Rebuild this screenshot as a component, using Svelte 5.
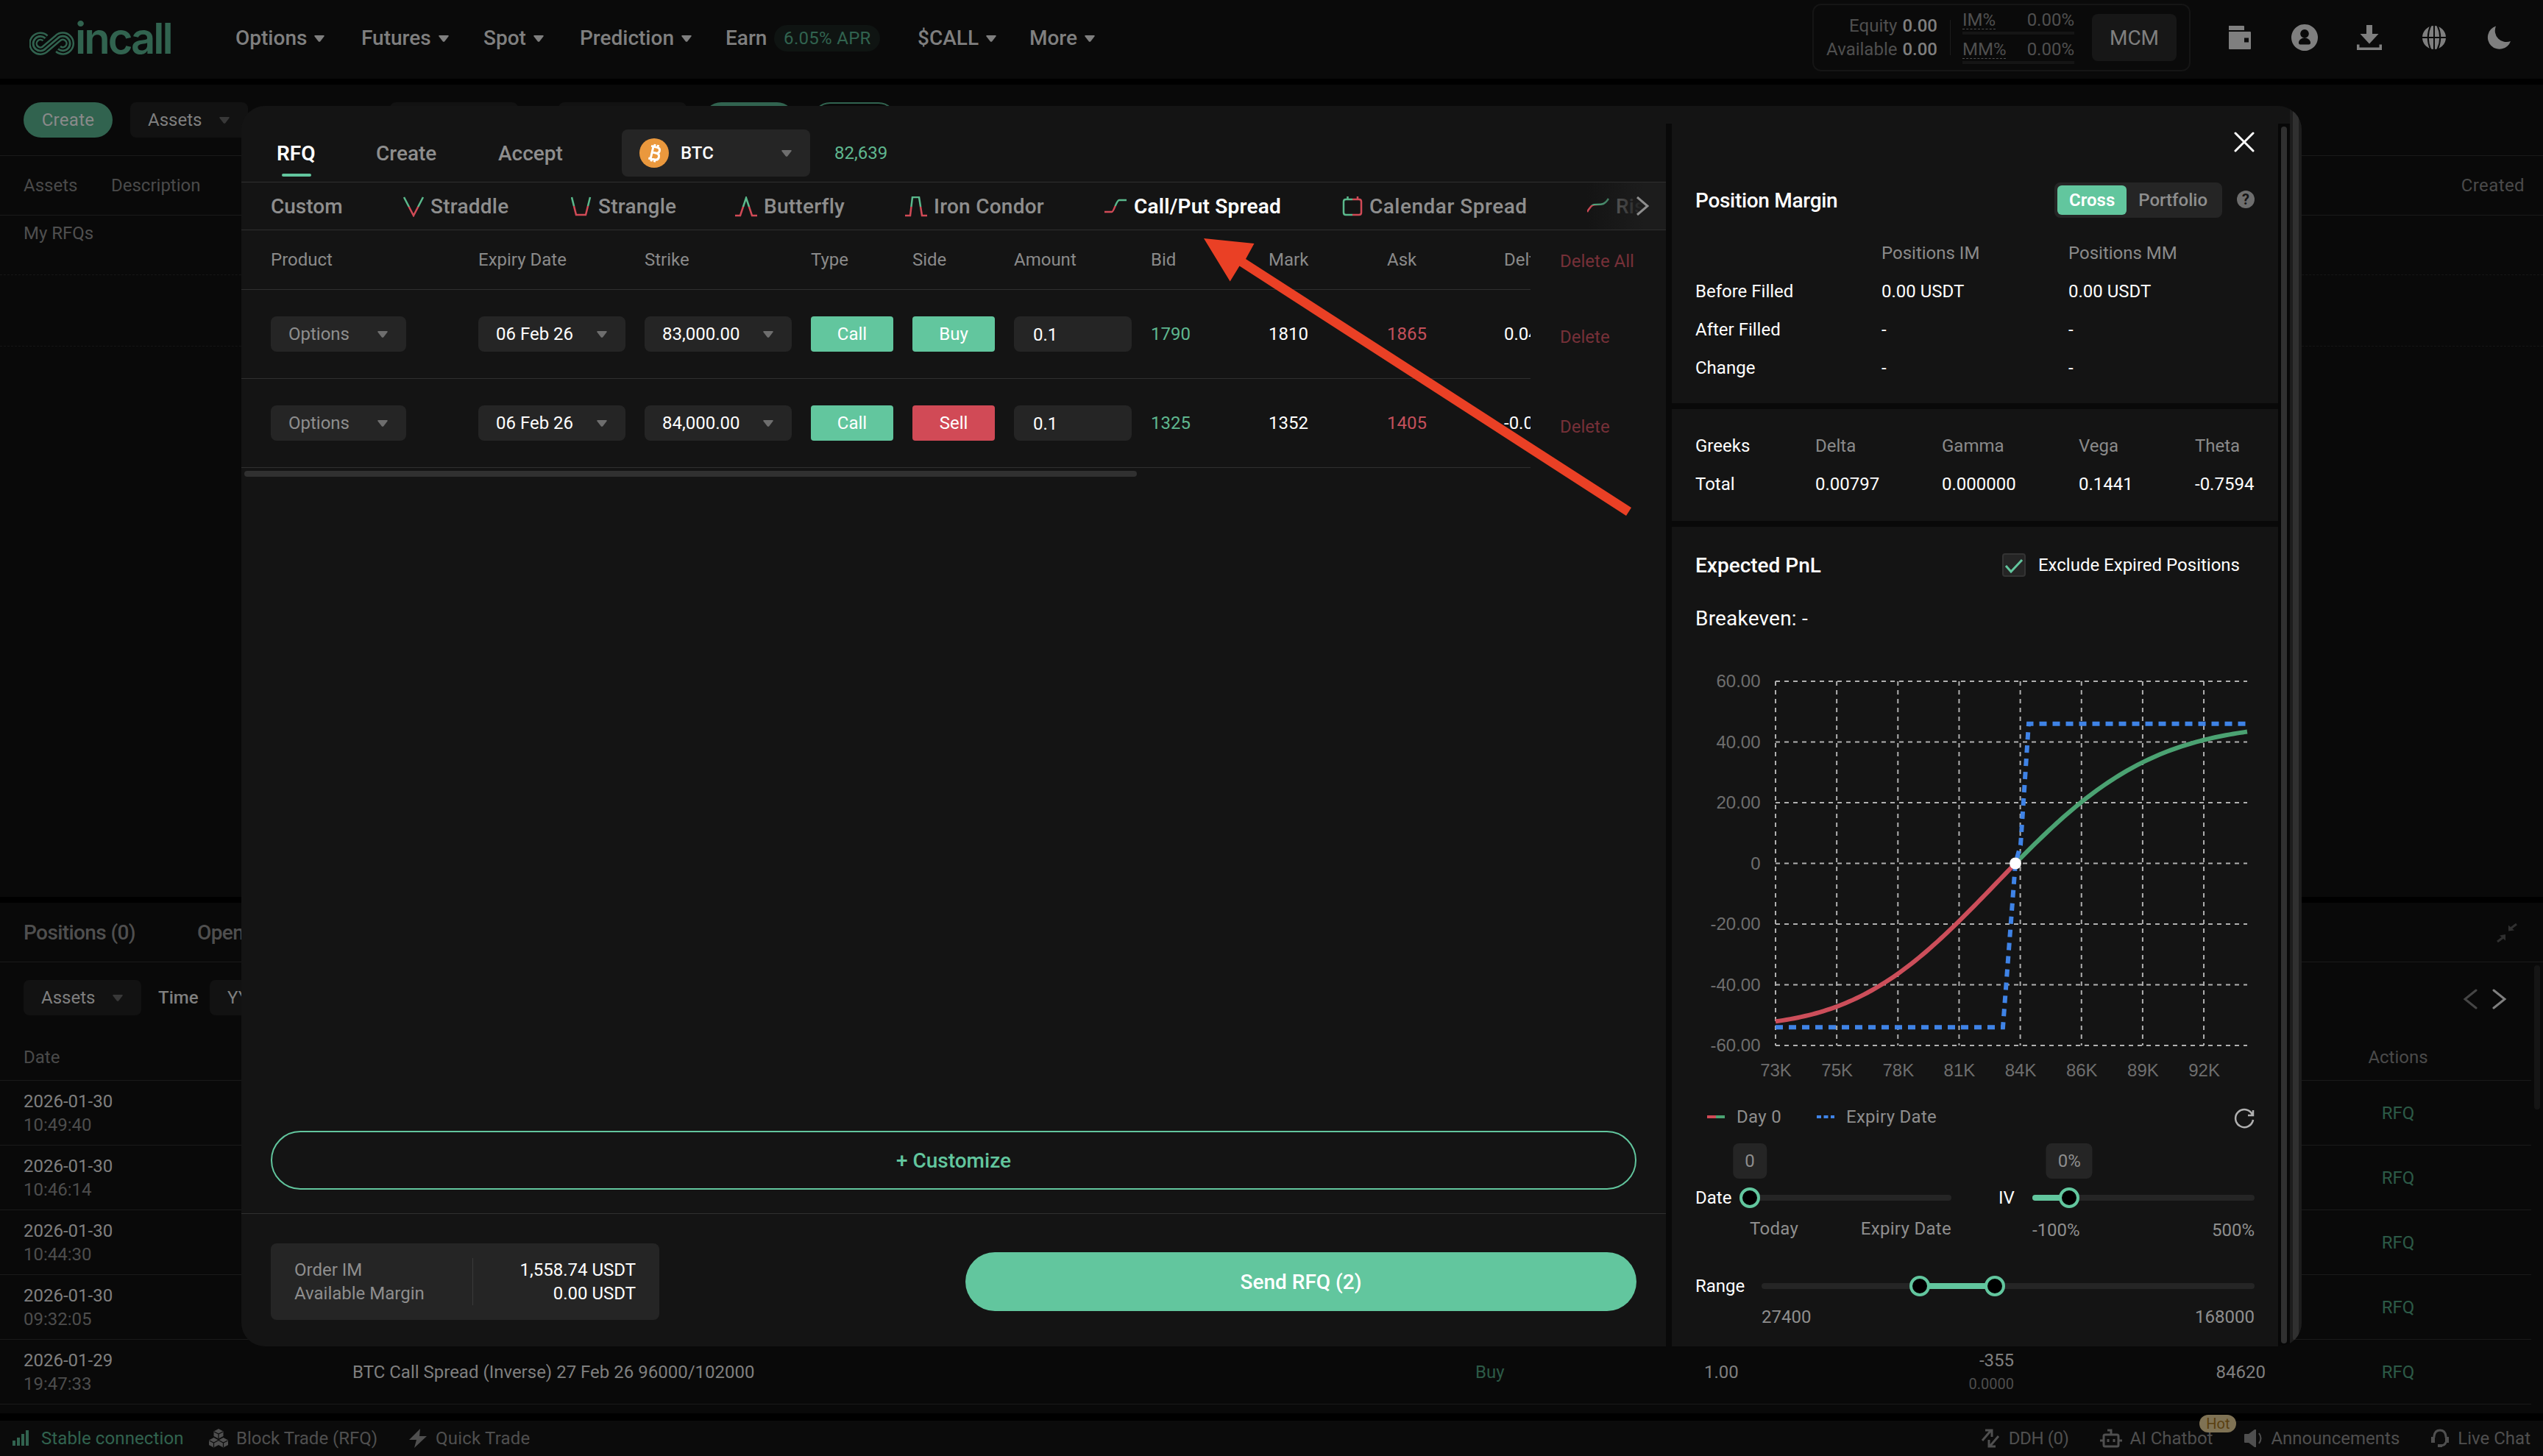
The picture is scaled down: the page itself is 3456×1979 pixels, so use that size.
<script lang="ts">
	type Strategy = { label: string, icon?: string, width?: number }
	type Leg = { strike: string, side: string, bid: string, mark: string, ask: string, delta: string }

	const menu = [
		{ label: "Options", caret: true },
		{ label: "Futures", caret: true },
		{ label: "Spot", caret: true },
		{ label: "Prediction", caret: true },
		{ label: "Earn", badge: "6.05% APR" },
		{ label: "$CALL", caret: true },
		{ label: "More", caret: true }
	]

	const strategies: Strategy[] = [
		{ label: "Custom" },
		{ label: "Straddle", width: 28, icon: "M1 1 L14 26 L27 1" },
		{ label: "Strangle", width: 28, icon: "M1 1 L7 25 H20 L26 1" },
		{ label: "Butterfly", width: 30, icon: "M0 26 H7 L15 2 L23 26 H30" },
		{ label: "Iron Condor", width: 30, icon: "M0 26 H7 L10 1 H19 L23 26 H30" },
		{ label: "Call/Put Spread", width: 30, icon: "M0 21 H10 C13 21 16 5 20 5 H30" },
		{ label: "Calendar Spread", width: 28, icon: "M5 4 H23 Q26 4 26 7 V22 Q26 25 23 25 H5 Q2 25 2 22 V7 Q2 4 5 4 M7.500 0 V4 M21 0 V4" },
		{ label: "Risk Reversal", width: 30, icon: "M0 21 C6 11 8 11 14 11 S24 11 29 3" }
	]
	let active = $state("Call/Put Spread")

	const legs: Leg[] = [
		{ strike: "83,000.00", side: "Buy", bid: "1790", mark: "1810", ask: "1865", delta: "0.04512" },
		{ strike: "84,000.00", side: "Sell", bid: "1325", mark: "1352", ask: "1405", delta: "-0.03715" }
	]

	const history = [
		{ date: "2026-01-30", time: "10:49:40" },
		{ date: "2026-01-30", time: "10:46:14" },
		{ date: "2026-01-30", time: "10:44:30" },
		{ date: "2026-01-30", time: "09:32:05" },
		{ date: "2026-01-29", time: "19:47:33", name: "BTC Call Spread (Inverse) 27 Feb 26 96000/102000", side: "Buy", amount: "1.00", price: "-355", sub: "0.0000", index: "84620" }
	]

	const greeks = [
		["Delta", "0.00797"],
		["Gamma", "0.000000"],
		["Vega", "0.1441"],
		["Theta", "-0.7594"]
	]

	// chart geometry
	const plot = { left: 109, top: 46, width: 641, step: 82.5, col: 83.15 }
	const yTicks = ["60.00", "40.00", "20.00", "0", "-20.00", "-40.00", "-60.00"]
	const xTicks = ["73K", "75K", "78K", "81K", "84K", "86K", "89K", "92K"]
	const breakeven = 326

	const px = (x: number) => plot.left + x
	const py = (v: number) => plot.top + (60 - v) / 20 * plot.step

	/** Spread value before expiry: a normal cdf between max loss and max profit */
	function dayZero(x: number) {
		const z = -2.07 + 0.00707 * x - 1.271e-6 * x * x
		return -54 + 100 / (1 + Math.exp(-1.5976 * z - 0.07056 * z ** 3))
	}

	function curve(from: number, to: number) {
		let d = ""
		for (let x = from; x < to; x += 5) d += `${d ? "L" : "M"}${px(x)} ${py(dayZero(x))} `
		return d + `L${px(to)} ${py(dayZero(to))}`
	}

	const expiry = [[0, -54], [309, -54], [326, 0], [333, 6], [344, 46], [641, 46]]
	const expiryPath = expiry.map(([x, v], i) => `${i ? "L" : "M"}${px(x)} ${py(v)}`).join(" ")
</script>

{#snippet caret()}
	<svg class="caret" viewBox="0 0 14 9"><path d="M1.200 0 H12.800 Q14.300 .3 13.500 1.600 L8.300 8.200 Q7 9.500 5.700 8.200 L.5 1.600 Q-.3 .3 1.200 0Z" /></svg>
{/snippet}

{#snippet select(label: string, muted: boolean = false)}
	<div class="select" class:muted>
		<span>{label}</span>
		{@render caret()}
	</div>
{/snippet}

{#snippet slider(from: number, to: number, handles: number[], tip: string = "")}
	<div class="track">
		<div class="fill" style="left: {from}%; width: {to - from}%"></div>
		{#each handles as h}
			<div class="handle" style="left: {h}%"></div>
		{/each}
		{#if tip}
			<div class="tip" style="left: {to}%">{tip}</div>
		{/if}
	</div>
{/snippet}

<div class="page">
	<header>
		<svg class="mark" viewBox="0 0 62 34">
			<defs>
				<linearGradient id="updown" x1="0" y1="0" x2="0" y2="1">
					<stop offset=".5" stop-color="#5ab98c" /><stop offset=".52" stop-color="#d14a56" />
				</linearGradient>
				<linearGradient id="sideways" x1="0" y1="0" x2="1" y2="0">
					<stop offset=".5" stop-color="#5ab98c" /><stop offset=".52" stop-color="#d14a56" />
				</linearGradient>
			</defs>
			{#each [["green", 11.8], ["dark", 6.8], ["green", 2.8]] as [tone, w]}
				<path class={tone} stroke-width={w} d="M21.500 10 A9.800 9.800 0 1 0 22 24 L38.500 10 A9.800 9.800 0 1 1 39 24.500" />
			{/each}
		</svg>
		<span class="brand">incall</span>
		<nav>
			{#each menu as m}
				<div class="menu">
					<span>{m.label}</span>
					{#if m.caret}{@render caret()}{/if}
					{#if m.badge}<em>{m.badge}</em>{/if}
				</div>
			{/each}
		</nav>
		<div class="account">
			<div class="equity">
				<span>Equity <b>0.00</b></span>
				<span>Available <b>0.00</b></span>
			</div>
			<div class="ratios">
				<div><u>IM%</u><span>0.00%</span></div>
				<div><u>MM%</u><span>0.00%</span></div>
			</div>
			<div class="mcm">MCM</div>
		</div>
		<div class="tools">
			<svg viewBox="0 0 40 40"><path d="M5 4 h20 a1 1 0 0 1 1 1 v5 H5z M5 12 h29 a1 1 0 0 1 1 1 v22 a1 1 0 0 1 -1 1 H6 a1 1 0 0 1 -1 -1z M26 20.500 v6 h6 v-6z" fill-rule="evenodd" /></svg>
			<svg viewBox="0 0 40 40"><path fill-rule="evenodd" d="M20 2 a18 18 0 1 0 .01 0z M20 9 a5.800 5.800 0 1 1 -.01 0z M12 26 q2 -5.500 8 -5.500 t8 5.500 v1.500 q0 2 -2 2 h-12 q-2 0 -2 -2z" /></svg>
			<svg viewBox="0 0 40 40"><path d="M16 3 h8 v12 h8.500 L20 28.500 L7.500 15 H16z M3 29.500 h3.500 v4 h27 v-4 H37 v7.500 H3z" /></svg>
			<svg viewBox="0 0 40 40"><circle cx="20" cy="20" r="16" /><path class="cut" d="M4 20 H36 M20 4 V36 M15.500 3.500 Q8 20 15.500 36.500 M24.500 3.500 Q32 20 24.500 36.500" /></svg>
			<svg viewBox="0 0 40 40"><path d="M16 4.500 A16 16 0 1 0 36 25 A15.500 15.500 0 0 1 16 4.500z" /></svg>
		</div>
	</header>

	<section class="rfqs">
		<div class="filters">
			<div class="pill">Create</div>
			{@render select("Assets")}
			<div class="blank one"></div>
			<div class="blank two"></div>
			<div class="pill search"></div>
			<div class="pill outline"></div>
		</div>
		<div class="heads"><span>Assets</span><span>Description</span><span class="end">Created</span></div>
		<div class="sub">My RFQs</div>
		<div class="empty"></div>
	</section>

	<section class="positions">
		<div class="tabs">
			<span>Positions (0)</span><span>Open Orders (0)</span>
			<svg class="shrink" viewBox="0 0 28 28"><path d="M27 2 L19 8 M1 26 L9 20" /><path class="solid" d="M16 3.500 L24 10.500 L16 11.500z M12 24.500 L4 17.500 L12 16z" /></svg>
		</div>
		<div class="scroller">
			<div class="filters">
				{@render select("Assets")}
				<span>Time</span>
				<div class="select date"><span>YYYY-MM-DD</span></div>
				<svg class="pager" viewBox="0 0 60 28"><path class="off" d="M18 2 L3 14 L18 26" /><path d="M42 2 L57 14 L42 26" /></svg>
			</div>
			<div class="row head"><span>Date</span><i></i><i></i><i></i><i></i><i></i><span class="mid">Actions</span></div>
			{#each history as h}
				<div class="row">
					<div>{h.date}<small>{h.time}</small></div>
					<span>{h.name ?? ""}</span>
					<span class="go">{h.side ?? ""}</span>
					<span>{h.amount ?? ""}</span>
					<div class="end price">{h.price ?? ""}<small>{h.sub ?? ""}</small></div>
					<span class="end">{h.index ?? ""}</span>
					<span class="mid go">RFQ</span>
				</div>
			{/each}
			<div class="bar"></div>
		</div>
	</section>

	<footer>
		<svg class="w22" viewBox="0 0 22 22"><path class="sig" d="M0 14h4v7h-4z M6 10h4v11h-4z M12 5h4v16h-4z M18 0h4v21h-4z" /></svg>
		<span class="ok">Stable connection</span>
		<svg class="w26 blocks" viewBox="0 0 26 26"><path d="M13 0 L19.500 3.500 V10 L13 13.500 L6.500 10 V3.500z M6.500 12 L13 15.500 V22 L6.500 25.500 L0 22 V15.500z M19.500 12 L26 15.500 V22 L19.500 25.500 L13 22 V15.500z" /><path class="cut" d="M7 4 L13 7 L19 4 M13 7 V13 M.5 16 L6.500 19 L13 15.500 M6.500 19 V25 M13 15.500 L19.500 19 L25.500 16 M19.500 19 V25" /></svg>
		<span class="block">Block Trade (RFQ)</span>
		<svg class="w26 bolt" viewBox="0 0 26 26"><path d="M16 0 L1 15 H11 L8 26 L25 10 H15z" /></svg>
		<span class="quick">Quick Trade</span>
		<div class="right">
			<svg class="w28 line" viewBox="0 0 28 28"><path d="M3 17 L15 3 M7 3 H16 V12 M25 11 L13 25 M21 25 H12 V16" /></svg>
			<span class="ddh">DDH (0)</span>
			<svg class="w30 line" viewBox="0 0 30 28"><path d="M7 9 H23 Q25 9 25 11 V23 Q25 25 23 25 H7 Q5 25 5 23 V11 Q5 9 7 9z M15 9 V3 H10 M0 17 H5 M25 17 H30 M11 15 V19 M19 15 V19" /></svg>
			<span class="hot">AI Chatbot<em>Hot</em></span>
			<svg class="w26" viewBox="0 0 26 26"><path d="M1 8 Q1 7 2 7 H7 L15 1 H17 V25 H15 L7 19 H2 Q1 19 1 18z" /><path class="thin" d="M21 6 Q26 13 21 20" /></svg>
			<span>Announcements</span>
			<svg class="w26 line" viewBox="0 0 26 26"><path d="M5 12 V10 Q6 2 13 2 Q20 2 21 10 V12 M21 18 Q20 23 13 23" /><path class="solid" d="M1 11 h5 v8 h-5z M20 11 h5 v8 h-5z M10 21h6v4h-6z" /></svg>
			<span>Live Chat</span>
		</div>
	</footer>

	<div class="modal">
		<div class="main">
			<div class="types">
				<span class="on">RFQ</span>
				<span>Create</span>
				<span>Accept</span>
				<div class="coin">
					<svg class="btc" viewBox="0 0 40 40"><circle cx="20" cy="20" r="20" /><path transform="rotate(13 20 20)" d="M14 11.500 H22 Q26.500 11.500 26.500 15.500 Q26.500 19.500 22 19.500 H17 M17 19.500 H23 Q27.500 19.500 27.500 24 Q27.500 28.500 23 28.500 H14 M17 11.500 V28.500 M18.500 8 V12 M23 8 V12 M18.500 28.500 V32 M23 28.500 V32" /></svg>
					<b>BTC</b>
					{@render caret()}
				</div>
				<span class="last">82,639</span>
			</div>

			<div class="strategies">
				{#each strategies as s}
					<button class:active={active === s.label} onclick={() => (active = s.label)}>
						{#if s.icon}
							<svg width={s.width} height="28" viewBox="0 0 {s.width} 28" class:split={s.label === "Calendar Spread"}><path d={s.icon} /></svg>
						{/if}
						{s.label}
					</button>
				{/each}
				<div class="fade"><svg viewBox="0 0 18 26"><path d="M2 1 L16 13 L2 25" /></svg></div>
			</div>

			<div class="legs">
				<div class="table">
					<div class="leg top">
						<span>Product</span><span>Expiry Date</span><span>Strike</span><span>Type</span><span>Side</span>
						<span>Amount</span><span>Bid</span><span>Mark</span><span>Ask</span><span>Delta</span>
					</div>
					{#each legs as leg}
						<div class="leg">
							{@render select("Options", true)}
							{@render select("06 Feb 26")}
							{@render select(leg.strike)}
							<div class="tag">Call</div>
							<div class="tag" class:sell={leg.side === "Sell"}>{leg.side}</div>
							<div class="amount">0.1</div>
							<span class="up">{leg.bid}</span>
							<span>{leg.mark}</span>
							<span class="down">{leg.ask}</span>
							<span>{leg.delta}</span>
						</div>
					{/each}
				</div>
				<div class="deletes">
					<span>Delete All</span>
					{#each legs as _}<span>Delete</span>{/each}
				</div>
			</div>
			<div class="hbar"></div>

			<div class="customize">+ Customize</div>

			<div class="submit">
				<div class="margin">
					<div>Order IM<br />Available Margin</div>
					<div class="nums">1,558.74 USDT<br />0.00 USDT</div>
				</div>
				<div class="send">Send RFQ (2)</div>
			</div>
		</div>

		<aside>
			<div class="card first">
				<svg class="close" viewBox="0 0 28 28"><path d="M2 2 L26 26 M26 2 L2 26" /></svg>
				<div class="title">
					<h3>Position Margin</h3>
					<div class="toggle"><span class="on">Cross</span><span>Portfolio</span></div>
					<div class="help">?</div>
				</div>
				<div class="grid3">
					<i></i><span class="dim">Positions IM</span><span class="dim">Positions MM</span>
					<span>Before Filled</span><span>0.00 USDT</span><span>0.00 USDT</span>
					<span>After Filled</span><span>-</span><span>-</span>
					<span>Change</span><span>-</span><span>-</span>
				</div>
			</div>

			<div class="card greeks">
				<div><span>Greeks</span><span>Total</span></div>
				{#each greeks as [name, value]}
					<div><span class="dim">{name}</span><span>{value}</span></div>
				{/each}
			</div>

			<div class="card pnl">
				<div class="title">
					<h3>Expected PnL</h3>
					<svg class="check" viewBox="0 0 32 32"><rect x="1" y="1" width="30" height="30" rx="3" /><path d="M5 17 L12 25 L27 9" /></svg>
					<span>Exclude Expired Positions</span>
				</div>
				<div class="even">Breakeven: -</div>

				<svg class="chart" viewBox="0 0 776 600">
					{#each yTicks as t, i}
						<line class="rule" x1={plot.left} x2={plot.left + plot.width} y1={plot.top + i * plot.step} y2={plot.top + i * plot.step} />
						<text x="88.500" y={plot.top + i * plot.step + 8} text-anchor="end">{t}</text>
					{/each}
					{#each xTicks as t, i}
						<line class="rule" y1={plot.top} y2={plot.top + 6 * plot.step} x1={plot.left + i * plot.col} x2={plot.left + i * plot.col} />
						<text x={plot.left + i * plot.col + 0.5} y="583" text-anchor="middle">{t}</text>
					{/each}
					<path class="loss" d={curve(0, breakeven)} />
					<path class="profit" d={curve(332, plot.width)} />
					<path class="expiry" d={expiryPath} />
					<circle cx={px(breakeven)} cy={py(0)} r="8" />
				</svg>

				<div class="legend">
					<svg viewBox="0 0 24 4"><path class="r" d="M0 0h12v4h-12z" /><path class="g" d="M12 0h12v4h-12z" /></svg>
					<span class="day">Day 0</span>
					<svg viewBox="0 0 24 4"><path class="b" d="M0 0h6v4h-6z M9.500 0h6v4h-6z M19 0h5v4h-5z" /></svg>
					<span>Expiry Date</span>
					<svg class="reset" viewBox="0 0 28 28"><path d="M25 9 A12 12 0 1 0 26 16 M26 3 V10 H19" /></svg>
				</div>

				<div class="sliders">
					<span>Date</span>
					{@render slider(0, 0, [0], "0")}
					<span class="iv">IV</span>
					{@render slider(0, 16.667, [16.667], "0%")}
					<i></i>
					<div class="ends"><span>Today</span><span>Expiry Date</span></div>
					<i></i>
					<div class="ends low"><span>-100%</span><span>500%</span></div>
				</div>
				<div class="range">
					<span>Range</span>
					{@render slider(32.1, 47.3, [32.1, 47.3])}
					<i></i>
					<div class="ends"><span>27400</span><span>168000</span></div>
				</div>
			</div>
		</aside>
		<div class="rail inner"></div>
		<div class="rail outer"></div>
	</div>

	<svg class="pointer" viewBox="0 0 600 400"><path d="M16 24 L84.500 31 L73 52 L597 390 L590 401 L64.500 61.500 L51.700 82.600z" /></svg>
</div>

<style>
	:global(body) {
		background: #090909;
	}

	.page {
		position: relative;
		width: 3456px;
		height: 1979px;
		overflow: hidden;
		background: #000;
		font-family: Roboto, "Liberation Sans", sans-serif;
		font-size: 24px;
		line-height: 32px;
		color: #7f7f7f;
		display: flex;
		flex-direction: column;
		gap: 8px;
		white-space: nowrap;
	}

	.page * {
		box-sizing: border-box;
	}

	svg {
		display: block;
		flex: none;
		fill: currentColor;
	}

	em, i {
		font-style: normal;
	}

	.caret {
		width: 14px;
		height: 9px;
	}

	/* top bar */
	header {
		height: 107px;
		flex: none;
		background: #0a0a0a;
		display: flex;
		align-items: center;
		padding: 0 24px 5px 40px;
	}

	.mark {
		width: 62px;
		height: 34px;
		margin-top: 15px;
		fill: none;
	}

	.mark .green {
		stroke: #31634f;
	}

	.mark .dark {
		stroke: #0a0a0a;
	}

	.brand {
		width: 218px;
		font: 600 58px/60px Inter, sans-serif;
		letter-spacing: -3px;
		color: #31634f;
		margin-top: 1px;
	}

	nav {
		display: grid;
		grid-template-columns: 171px 166px 131px 198px 261px 152px auto;
		font-size: 28px;
		font-weight: 500;
		margin-top: 2px;
		flex: 1;
	}

	.menu {
		display: flex;
		align-items: center;
		gap: 10px;
	}

	.menu em {
		font-size: 24px;
		font-weight: 400;
		height: 36px;
		line-height: 36px;
		width: 144px;
		text-align: center;
		border-radius: 18px;
		background: #0f1412;
		color: #31634f;
		letter-spacing: .3px;
	}

	.account {
		width: 514px;
		height: 92px;
		border: 2px solid #151515;
		border-radius: 12px;
		display: flex;
		align-items: center;
		padding-right: 17px;
		margin-right: 47px;
		color: #4f4f4f;
	}

	.equity {
		display: flex;
		flex-direction: column;
		width: 186px;
		height: 48px;
		justify-content: center;
		text-align: right;
		padding-right: 17px;
		border-right: 1px solid #1c1c1c;
	}

	.equity b {
		font-weight: 500;
		color: #7f7f7f;
		margin-left: 1px;
	}

	.ratios {
		width: 152px;
		margin-left: 16px;
		display: flex;
		flex-direction: column;
		gap: 8px;
	}

	.ratios div {
		display: flex;
		justify-content: space-between;
		border-bottom: 4px solid #151515;
		height: 32px;
		line-height: 24px;
	}

	.ratios u {
		text-decoration: none;
		border-bottom: 1px dashed #4f4f4f;
		height: 25px;
	}

	.mcm {
		width: 115px;
		height: 64px;
		line-height: 65px;
		margin-left: auto;
		border-radius: 8px;
		background: #171717;
		color: #7f7f7f;
		text-align: center;
		font-size: 28px;
	}

	.tools {
		display: flex;
		gap: 48px;
		padding-right: 16px;
	}

	.tools svg {
		width: 40px;
		height: 40px;
	}

	.tools .cut {
		stroke: #0a0a0a;
		stroke-width: 2;
		fill: none;
	}

	/* request list behind the dialog */
	.rfqs {
		height: 1104px;
		flex: none;
		background: #090909;
	}

	.rfqs .filters {
		height: 97px;
		padding: 24px 0 0 32px;
		display: flex;
		border-bottom: 1px solid #1a1a1a;
	}

	.pill {
		width: 121px;
		height: 48px;
		line-height: 48px;
		border-radius: 24px;
		background: #31634f;
		color: #8a8a8a;
		text-align: center;
		letter-spacing: .3px;
		margin-right: 24px;
	}

	.blank {
		height: 48px;
		border-radius: 8px;
		background: #121212;
		width: 174px;
	}

	.blank.one {
		margin: 0 55px 0 193px;
	}

	.blank.two {
		margin-right: 23px;
	}

	.pill.search {
		width: 124px;
	}

	.pill.outline {
		width: 114px;
		background: none;
		border: 2px solid #31634f;
	}

	.select {
		display: flex;
		align-items: center;
		justify-content: space-between;
		height: 48px;
		border-radius: 8px;
		padding: 0 24px;
		background: #252525;
		color: #fff;
	}

	.select .caret {
		color: #6e6e6e;
		margin-right: 1px;
	}

	.select.muted {
		color: #8e8e8e;
	}

	.rfqs .select, .positions .select {
		width: 160px;
		background: #121212;
		color: #7f7f7f;
	}

	.rfqs .caret, .positions .caret {
		color: #383838;
	}

	.heads {
		display: grid;
		grid-template-columns: 119px 1fr auto;
		height: 81px;
		line-height: 80px;
		padding: 0 25px 0 32px;
		border-bottom: 1px solid #1a1a1a;
		color: #4a4a4a;
	}

	.heads .end {
		letter-spacing: .4px;
	}

	.sub {
		height: 80px;
		padding: 8px 32px;
		color: #4f4f4f;
	}

	.empty {
		height: 98px;
		border: dashed #161616;
		border-width: 1px 0;
	}

	/* positions panel */
	.positions {
		height: 694px;
		flex: none;
		background: #090909;
	}

	.tabs {
		display: grid;
		grid-template-columns: 236px 1fr 28px;
		align-items: center;
		height: 81px;
		padding: 2px 35px 0 32px;
		border-bottom: 1px solid #1a1a1a;
		font-size: 28px;
		font-weight: 500;
		letter-spacing: -.6px;
		color: #4f4f4f;
	}

	.shrink {
		width: 28px;
		height: 28px;
		fill: none;
		stroke: #303030;
		stroke-width: 3;
	}

	.shrink .solid {
		fill: #303030;
		stroke: none;
	}

	.scroller {
		position: relative;
		width: 3440px;
	}

	.positions .filters {
		height: 104px;
		padding: 24px 33px 0 32px;
		display: flex;
		align-items: flex-start;
		line-height: 48px;
	}

	.positions .filters > span {
		margin: 0 17px 0 23px;
		width: 53px;
		font-weight: 500;
	}

	.positions .select.date {
		width: 400px;
	}

	.pager {
		width: 60px;
		height: 28px;
		margin: 12px 0 0 auto;
		fill: none;
		stroke: #7f7f7f;
		stroke-width: 3;
		stroke-linecap: round;
	}

	.pager .off {
		stroke: #454545;
	}

	.row {
		display: grid;
		grid-template-columns: 447px 1526px 311px 121px 300px 342px 360px;
		align-items: center;
		height: 88px;
		padding-left: 32px;
		border-bottom: 1px solid #1a1a1a;
	}

	.row.head {
		height: 57px;
		color: #4a4a4a;
		padding-bottom: 7px;
	}

	.row small {
		display: block;
		font-size: 24px;
		color: #4d4d4d;
	}

	.row .price small {
		font-size: 20px;
	}

	.end {
		text-align: right;
	}

	.mid {
		text-align: center;
	}

	.go {
		color: #2c5a47;
	}

	.bar {
		position: absolute;
		right: -12px;
		top: 4px;
		width: 8px;
		height: 196px;
		border-radius: 4px;
		background: #151515;
	}

	/* status bar */
	footer {
		height: 50px;
		margin-top: 2px;
		flex: none;
		background: #0b0b0b;
		display: flex;
		align-items: center;
		padding: 0 17px 2px 17px;
		color: #4f4f4f;
	}

	footer .ok {
		color: #31634f;
		width: 228px;
		margin-left: 17px;
		letter-spacing: .1px;
	}

	footer .block {
		width: 234px;
		margin-left: 11px;
	}

	footer .quick {
		margin-left: 11px;
		letter-spacing: .2px;
	}

	.w22 { width: 22px; height: 22px; }
	.w26 { width: 26px; height: 26px; }
	.w28 { width: 28px; height: 28px; }
	.w30 { width: 30px; height: 28px; }

	.sig {
		fill: #31634f;
	}

	.blocks .cut {
		fill: none;
		stroke: #0b0b0b;
		stroke-width: 1.2;
	}

	.line {
		fill: none;
		stroke: currentColor;
		stroke-width: 3;
	}

	.line .solid {
		fill: currentColor;
		stroke: none;
	}

	.thin {
		fill: none;
		stroke: currentColor;
		stroke-width: 2;
	}

	.right {
		display: flex;
		align-items: center;
		margin-left: auto;
	}

	.right span {
		margin: 0 42px 0 11px;
	}

	.right span:last-child {
		margin-right: 0;
	}

	.right .ddh {
		letter-spacing: -.4px;
	}

	.hot {
		position: relative;
	}

	.hot em {
		position: absolute;
		right: -32px;
		top: -16px;
		width: 50px;
		height: 24px;
		border-radius: 12px;
		background: #7f7254;
		color: #5a4010;
		font-size: 20px;
		line-height: 24px;
		text-align: center;
	}

	/* dialog */
	.modal {
		position: absolute;
		left: 328px;
		top: 144px;
		width: 2800px;
		height: 1686px;
		border-radius: 32px;
		overflow: hidden;
		background: #141414;
		padding-top: 24px;
		display: flex;
	}

	.main {
		width: 1936px;
		flex: none;
		display: flex;
		flex-direction: column;
	}

	.types {
		height: 80px;
		flex: none;
		border-bottom: 1px solid #2f2f2f;
		display: grid;
		grid-template-columns: 134px 166px 168px 289px auto;
		padding: 8px 0 0 49px;
		font-size: 28px;
		font-weight: 500;
		line-height: 66px;
		color: #8e8e8e;
	}

	.types .on {
		color: #fff;
		font-weight: 600;
		text-indent: -1px;
	}

	.types .on::after {
		content: "";
		display: block;
		width: 40px;
		height: 4px;
		border-radius: 2px;
		margin: -6px 0 0 6px;
		background: #62c69e;
	}

	.coin {
		display: flex;
		align-items: center;
		width: 256px;
		height: 64px;
		padding: 0 25px 0 24px;
		border-radius: 8px;
		background: #252525;
		color: #fff;
		font-size: 24px;
	}

	.btc {
		width: 40px;
		height: 40px;
		fill: #ea983d;
	}

	.btc path {
		fill: none;
		stroke: #fff;
		stroke-width: 3;
	}

	.coin b {
		font-weight: 500;
		margin: 0 auto 0 16px;
	}

	.coin .caret {
		color: #6e6e6e;
	}

	.last {
		font-size: 24px;
		font-weight: 400;
		line-height: 64px;
		color: #5fb78f;
	}

	.strategies {
		position: relative;
		height: 65px;
		flex: none;
		overflow: hidden;
		border-bottom: 1px solid #2f2f2f;
		display: grid;
		grid-template-columns: 180px 228px 223px 231px 271px 323px 333px 147px;
		padding-left: 40px;
	}

	.strategies button {
		display: flex;
		align-items: center;
		gap: 9px;
		padding: 1px 0 0;
		border: 0;
		background: none;
		font: 500 28px/32px Roboto, sans-serif;
		letter-spacing: .25px;
		color: #8e8e8e;
		text-align: left;
		white-space: nowrap;
	}

	.strategies button:first-child {
		letter-spacing: 0;
	}

	.strategies button:nth-child(7) {
		letter-spacing: .5px;
	}

	.strategies button.active {
		gap: 10px;
		color: #fff;
		font-weight: 600;
		letter-spacing: .2px;
	}

	.strategies button svg {
		fill: none;
	}

	.strategies button path {
		stroke: url(#updown);
		stroke-width: 2.5;
	}

	.strategies .split path {
		stroke: url(#sideways);
	}

	.fade {
		position: absolute;
		right: 0;
		top: 0;
		width: 108px;
		height: 64px;
		padding: 19px 0 0 67px;
		background: linear-gradient(90deg, #1c1c1c00, #1c1c1c 72%);
	}

	.fade svg {
		width: 18px;
		height: 26px;
		fill: none;
		stroke: #8e8e8e;
		stroke-width: 3;
	}

	.legs {
		display: flex;
	}

	.table {
		width: 1752px;
		overflow: hidden;
	}

	.leg {
		display: grid;
		grid-template-columns: 282px 226px 226px 138px 138px 186px 160px 161px 159px 200px;
		align-items: center;
		height: 121px;
		padding-left: 40px;
		border-bottom: 1px solid #2f2f2f;
		width: 1916px;
		color: #fff;
	}

	.leg .select:nth-child(1) { width: 184px; }
	.leg .select:nth-child(2), .leg .select:nth-child(3) { width: 200px; }

	.leg.top {
		height: 81px;
		color: #8a8a8a;
	}

	.tag {
		width: 112px;
		height: 48px;
		line-height: 48px;
		border-radius: 4px;
		background: #62c69e;
		text-align: center;
	}

	.tag.sell {
		background: #d14a56;
	}

	.amount {
		width: 160px;
		height: 48px;
		line-height: 50px;
		padding-left: 26px;
		border-radius: 8px;
		background: #252525;
	}

	.up { color: #5fb78f; }
	.down { color: #c4505b; }

	.deletes {
		display: grid;
		grid-template-rows: 81px 122px 120px;
		line-height: 85px;
		padding-left: 40px;
		color: #763038;
	}

	.deletes span + span {
		line-height: 129px;
	}

	.hbar {
		width: 1213px;
		height: 8px;
		margin: 4px 0 0 4px;
		border-radius: 4px;
		background: #303030;
	}

	.customize {
		height: 80px;
		flex: none;
		margin: auto 40px 32px;
		border: 2px solid #62c69e;
		border-radius: 40px;
		text-align: center;
		line-height: 77px;
		font-size: 28px;
		font-weight: 500;
		color: #62c69e;
	}

	.submit {
		height: 181px;
		flex: none;
		border-top: 1px solid #2f2f2f;
		padding: 4px 40px 0;
		display: flex;
		align-items: center;
		justify-content: space-between;
	}

	.margin {
		width: 528px;
		height: 104px;
		padding: 20px 32px;
		border-radius: 8px;
		background: #252525;
		display: flex;
		justify-content: space-between;
		color: #8e8e8e;
	}

	.margin .nums {
		width: 222px;
		border-left: 1px solid #3a3a3a;
		color: #fff;
		text-align: right;
	}

	.send {
		width: 912px;
		height: 80px;
		border-radius: 40px;
		background: #62c69e;
		color: #fff;
		font-size: 28px;
		font-weight: 500;
		line-height: 82px;
		text-align: center;
	}

	aside {
		width: 832px;
		flex: none;
		padding-left: 8px;
		background: #090909;
		display: flex;
		flex-direction: column;
		gap: 8px;
		color: #fff;
	}

	.card {
		background: #141414;
		padding: 0 32px;
	}

	.first {
		height: 380px;
		padding-top: 11px;
	}

	.close {
		width: 28px;
		height: 28px;
		margin-left: auto;
		stroke: #fff;
		stroke-width: 3;
		stroke-linecap: round;
	}

	.title {
		display: flex;
		align-items: center;
	}

	.first .title {
		margin-top: 41px;
	}

	h3 {
		margin: 0 auto 0 0;
		padding-top: 1px;
		font-size: 28px;
		font-weight: 500;
		letter-spacing: -.3px;
	}

	.toggle {
		width: 228px;
		height: 48px;
		padding: 4px;
		border-radius: 8px;
		background: #252525;
		display: flex;
		line-height: 40px;
		font-weight: 500;
		color: #8e8e8e;
	}

	.toggle span {
		padding: 0 16px;
	}

	.toggle .on {
		background: #62c69e;
		border-radius: 6px;
		color: #fff;
		font-weight: 600;
	}

	.help {
		width: 24px;
		height: 24px;
		border-radius: 50%;
		margin: 0 0 2px 20px;
		background: #6e6e6e;
		color: #141414;
		font-weight: 700;
		font-size: 20px;
		line-height: 24px;
		text-align: center;
	}

	.grid3 {
		display: grid;
		grid-template-columns: 253px 254px auto;
		grid-auto-rows: 52px;
		line-height: 52px;
		margin-top: 22px;
	}

	.dim {
		color: #8a8a8a;
	}

	.greeks {
		height: 152px;
		padding-top: 24px;
		display: grid;
		grid-template-columns: 163px 172px 186px 158px auto;
		line-height: 52px;
	}

	.greeks div {
		display: flex;
		flex-direction: column;
	}

	.pnl {
		flex: 1;
		padding-top: 36px;
	}

	.pnl .title {
		height: 32px;
	}

	.pnl .title span {
		margin: 0 20px 0 17px;
	}

	.pnl h3 {
		letter-spacing: 0;
	}

	.check {
		width: 32px;
		height: 32px;
	}

	.check rect {
		fill: #252525;
		stroke: #333;
		stroke-width: 2;
	}

	.check path {
		fill: none;
		stroke: #62c69e;
		stroke-width: 3;
	}

	.even {
		height: 40px;
		margin-top: 37px;
		line-height: 40px;
		font-size: 28px;
		letter-spacing: .2px;
	}

	.chart {
		width: 776px;
		height: 600px;
		margin-top: 19px;
		margin-right: -8px;
	}

	.chart text {
		font: 24px "Liberation Sans", sans-serif;
		fill: #6e6e6e;
	}

	.chart .rule {
		stroke: #b0b0b0;
		stroke-width: 2;
		stroke-dasharray: 6 6;
	}

	.loss, .profit, .expiry {
		fill: none;
		stroke-width: 6;
	}

	.loss { stroke: #cc4e5a; }
	.profit { stroke: #4ba272; }

	.expiry {
		stroke: #3f83e6;
		stroke-dasharray: 10 8;
	}

	.chart circle {
		fill: #fff;
	}

	.legend {
		display: flex;
		align-items: center;
		height: 40px;
		margin-top: 18px;
		padding-left: 16px;
		color: #8e8e8e;
		letter-spacing: .3px;
	}

	.legend svg {
		width: 24px;
		height: 4px;
		margin-right: 16px;
	}

	.legend .day {
		margin-right: 48px;
	}

	.legend .r { fill: #d14a56; }
	.legend .g { fill: #4ba272; }
	.legend .b { fill: #3f83e6; }

	.legend .reset {
		width: 28px;
		height: 28px;
		margin: 4px 0 0 auto;
		fill: none;
		stroke: #b0b0b0;
		stroke-width: 2.5;
	}

	.sliders {
		display: grid;
		grid-template-columns: 74px 274px 110px 302px;
		grid-template-rows: 32px 52px;
		align-items: center;
		margin-top: 74px;
	}

	.iv {
		padding-left: 64px;
	}

	.range {
		display: grid;
		grid-template-columns: 90px 670px;
		grid-template-rows: 32px 52px;
		align-items: center;
		margin-top: 36px;
	}

	.track {
		position: relative;
		height: 8px;
		border-radius: 4px;
		background: #252525;
	}

	.fill {
		position: absolute;
		height: 8px;
		border-radius: 4px;
		background: #62c69e;
	}

	.handle {
		position: absolute;
		top: -10px;
		width: 28px;
		height: 28px;
		margin-left: -14px;
		border: 4px solid #62c69e;
		border-radius: 50%;
		background: #000;
	}

	.tip {
		position: absolute;
		top: -70px;
		height: 48px;
		line-height: 48px;
		padding: 0 16px;
		border-radius: 8px;
		transform: translateX(-50%);
		background: #252525;
		color: #8e8e8e;
	}

	.ends {
		display: flex;
		justify-content: space-between;
		color: #8e8e8e;
	}

	.sliders .ends {
		letter-spacing: .3px;
	}

	.sliders .ends.low {
		padding-top: 3px;
		letter-spacing: 0;
	}

	.rail {
		width: 16px;
		flex: none;
		padding: 4px;
		background: #070707;
	}

	.rail::before {
		content: "";
		display: block;
		width: 8px;
		height: 100%;
		border-radius: 4px;
		background: #303030;
	}

	.rail.outer {
		margin-top: -24px;
		padding-bottom: 8px;
		background: #1d1d1d;
	}

	.pointer {
		position: absolute;
		left: 1620px;
		top: 300px;
		width: 600px;
		height: 400px;
		overflow: visible;
		fill: #ea4025;
	}
</style>
